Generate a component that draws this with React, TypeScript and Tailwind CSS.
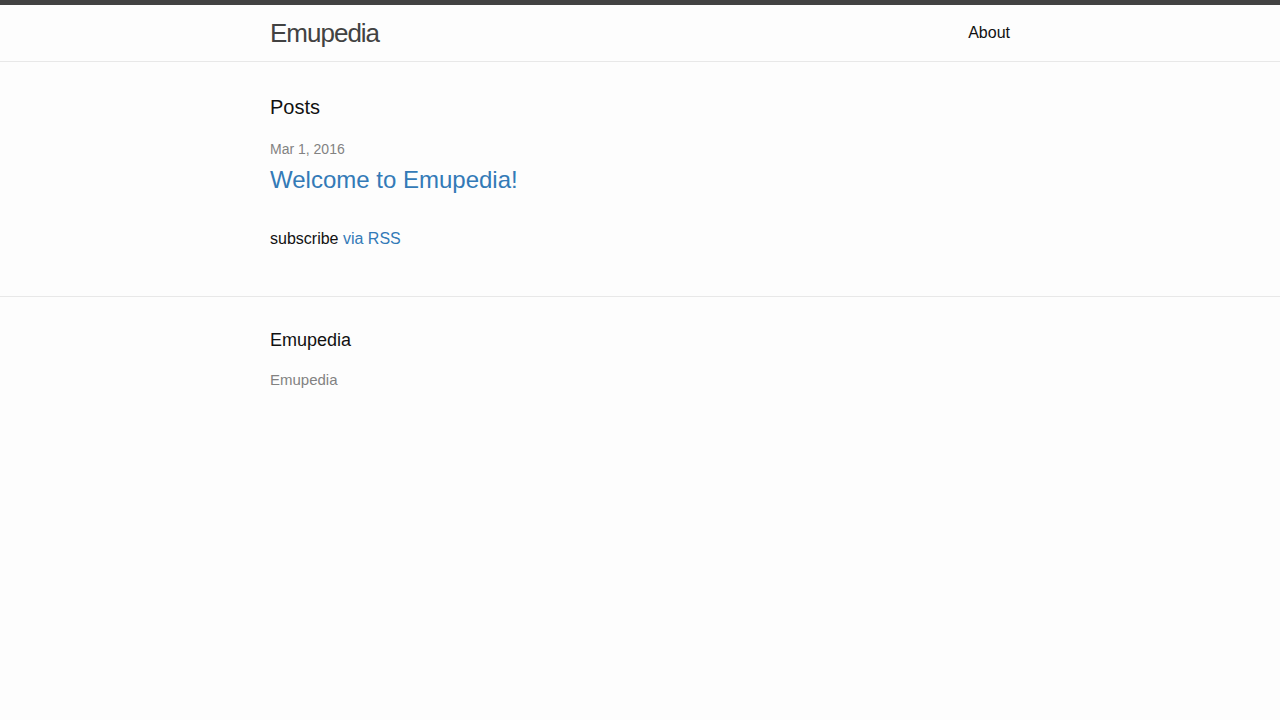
import React from 'react';

const font = "font-['Liberation_Sans',Helvetica,Arial,sans-serif]";

const posts = [{ date: 'Mar 1, 2016', title: 'Welcome to Emupedia!' }];

export default function App() {
  return (
    <div className={`min-h-[720px] bg-[#fdfdfd] text-[#111] text-[16px] leading-[1.5] ${font}`}>
      <header className="border-t-[5px] border-[#424242] border-b border-b-[#e8e8e8] min-h-[56px]">
        <div className="max-w-[800px] mx-auto px-[30px] flex justify-between items-center h-[56px]">
          <a className="text-[26px] font-light tracking-[-1px] leading-[56px] text-[#424242]">Emupedia</a>
          <nav className="leading-[56px]">
            <a className="text-[#111] leading-[1.5]">About</a>
          </nav>
        </div>
      </header>

      <main className="py-[30px]">
        <div className="max-w-[800px] mx-auto px-[30px]">
          <h1 className="text-[20px] leading-[30px] mb-[15px]">Posts</h1>
          <ul>
            {posts.map((p) => (
              <li key={p.title} className="mb-[29px]">
                <span className="block text-[14px] leading-[21px] text-[#828282] pt-[2px]">{p.date}</span>
                <h2 className="text-[24px] leading-[36px] pt-[2px]">
                  <a className="text-[#337ab7]">{p.title}</a>
                </h2>
              </li>
            ))}
          </ul>
          <p className="leading-[24px] mb-[15px]">
            subscribe <a className="text-[#337ab7]">via RSS</a>
          </p>
        </div>
      </main>

      <footer className="border-t border-[#e8e8e8] py-[30px]">
        <div className="max-w-[800px] mx-auto px-[30px]">
          <h2 className="text-[18px] leading-[27px] mb-[15px]">Emupedia</h2>
          <p className="text-[15px] leading-[22px] text-[#828282]">Emupedia</p>
        </div>
      </footer>
    </div>
  );
}
